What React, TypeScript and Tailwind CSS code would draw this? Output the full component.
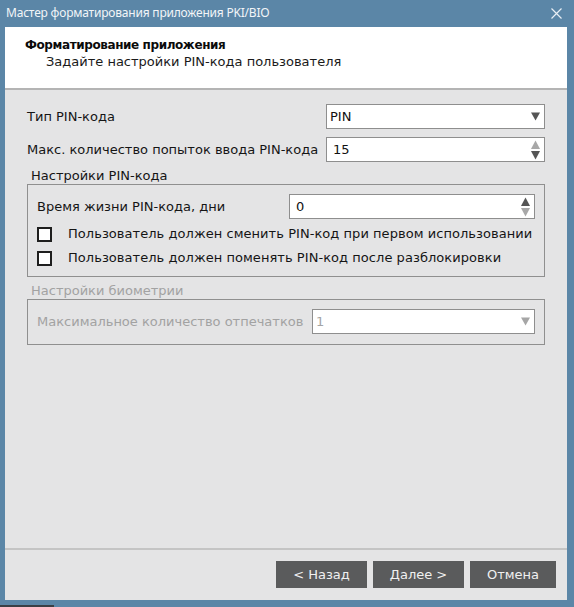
import React from "react";

const font = { fontFamily: '"DejaVu Sans", "Liberation Sans", sans-serif' };

function ComboArrow({ disabled }: { disabled?: boolean }) {
  return (
    <svg width="9" height="9" viewBox="0 0 9 9" className="shrink-0">
      <path d="M0 0.5 L9 0.5 L4.5 8.5 Z" fill={disabled ? "#a6a6a6" : "#555"} />
    </svg>
  );
}

function SpinArrows({ upDim, downDim }: { upDim?: boolean; downDim?: boolean }) {
  return (
    <svg width="9" height="20" viewBox="0 0 9 20" className="shrink-0">
      <path d="M4.5 0.5 L9 9 L0 9 Z" fill={upDim ? "#a8a8a8" : "#555"} />
      <path d="M0 11 L9 11 L4.5 19.5 Z" fill={downDim ? "#a8a8a8" : "#555"} />
    </svg>
  );
}

function ComboBox({ value, width, disabled }: { value: string; width: string; disabled?: boolean }) {
  return (
    <div
      className={`${width} flex h-[25px] items-center justify-between border border-[#8e8e8e] bg-white pl-[3px] pr-[4px] ${
        disabled ? "text-[#a4a4a4]" : "text-[#111]"
      }`}
    >
      <span>{value}</span>
      <ComboArrow disabled={disabled} />
    </div>
  );
}

function SpinBox({
  value,
  width,
  upDim,
  downDim,
}: {
  value: string;
  width: string;
  upDim?: boolean;
  downDim?: boolean;
}) {
  return (
    <div
      className={`${width} flex h-[25px] items-center justify-between border border-[#8e8e8e] bg-white pl-[6px] pr-[4px] text-[#111]`}
    >
      <span>{value}</span>
      <SpinArrows upDim={upDim} downDim={downDim} />
    </div>
  );
}

function CheckRow({ label }: { label: string }) {
  return (
    <div className="flex h-[24px] items-center">
      <span className="h-[15px] w-[15px] shrink-0 border-2 border-[#1e1e1e] bg-white" />
      <span className="ml-[16px] tracking-[0.05px] text-[#151515]">{label}</span>
    </div>
  );
}

function WizardButton({ label, width }: { label: string; width: string }) {
  return (
    <button
      className={`${width} h-[27px] bg-[#5a5b5c] text-[13px] text-[#f0f0f0]`}
      style={font}
    >
      {label}
    </button>
  );
}

export default function App() {
  return (
    <div className="relative flex h-[607px] w-[574px] flex-col bg-[#5b86a7]" style={font}>
      {/* title bar */}
      <div
        className="flex h-[27px] shrink-0 items-center justify-between pl-[6px] pr-[12px] text-[12px] tracking-[-0.2px] text-[#f2f5f8]"
        style={{ fontFamily: '"Noto Sans", "Open Sans", sans-serif' }}
      >
        <span className="pb-[1px]">Мастер форматирования приложения PKI/BIO</span>
        <svg width="11" height="11" viewBox="0 0 11 11">
          <path d="M0.5 0.5 L10.5 10.5 M10.5 0.5 L0.5 10.5" stroke="#e8eef4" strokeWidth="1.2" />
        </svg>
      </div>

      <div className="ml-[5px] mr-[7px] mb-[7px] flex flex-1 flex-col bg-[#e4e4e5] text-[13px]">
        {/* header */}
        <div className="h-[63px] shrink-0 border-b-2 border-[#b4b4b4] bg-white pl-[20px] pt-[10px]">
          <div className="text-[12px] font-bold leading-[16px] tracking-[-0.4px] text-[#0b0b0b]">
            Форматирование приложения
          </div>
          <div className="mt-[1px] pl-[21px] leading-[16px] text-[#1a1a1a]">
            Задайте настройки PIN-кода пользователя
          </div>
        </div>

        {/* form */}
        <div className="flex flex-col px-[22px] pt-[14px] text-[#151515]">
          <div className="flex items-center justify-between">
            <span>Тип PIN-кода</span>
            <ComboBox value="PIN" width="w-[219px]" />
          </div>
          <div className="mt-[8px] flex items-center justify-between">
            <span>Макс. количество попыток ввода PIN-кода</span>
            <SpinBox value="15" width="w-[219px]" upDim />
          </div>

          <div className="mt-[6px] pl-[4px] leading-[16px]">Настройки PIN-кода</div>
          <div className="flex flex-col border border-[#8f8f8f] pl-[9px] pr-[9px] pt-[9px] pb-[6px]">
            <div className="flex items-center justify-between">
              <span>Время жизни PIN-кода, дни</span>
              <SpinBox value="0" width="w-[246px]" downDim />
            </div>
            <div className="mt-[3px]">
              <CheckRow label="Пользователь должен сменить PIN-код при первом использовании" />
              <CheckRow label="Пользователь должен поменять PIN-код после разблокировки" />
            </div>
          </div>

          <div className="mt-[6px] pl-[4px] leading-[16px] text-[#a2a2a2]">Настройки биометрии</div>
          <div className="flex items-center justify-between border border-[#8f8f8f] pl-[9px] pr-[9px] pt-[9px] pb-[10px]">
            <span className="text-[#a2a2a2]">Максимальное количество отпечатков</span>
            <ComboBox value="1" width="w-[223px]" disabled />
          </div>
        </div>

        <div className="flex-1" />

        {/* footer */}
        <div className="border-t-2 border-[#c4c4c4]" />
        <div className="flex justify-end gap-[6px] pr-[11px] pt-[11px] pb-[12px]">
          <WizardButton label="< Назад" width="w-[91px]" />
          <WizardButton label="Далее >" width="w-[91px]" />
          <WizardButton label="Отмена" width="w-[86px]" />
        </div>
      </div>

      <div className="absolute bottom-0 left-0 h-[2px] w-[54px] bg-[#3a3f45]" />
    </div>
  );
}
